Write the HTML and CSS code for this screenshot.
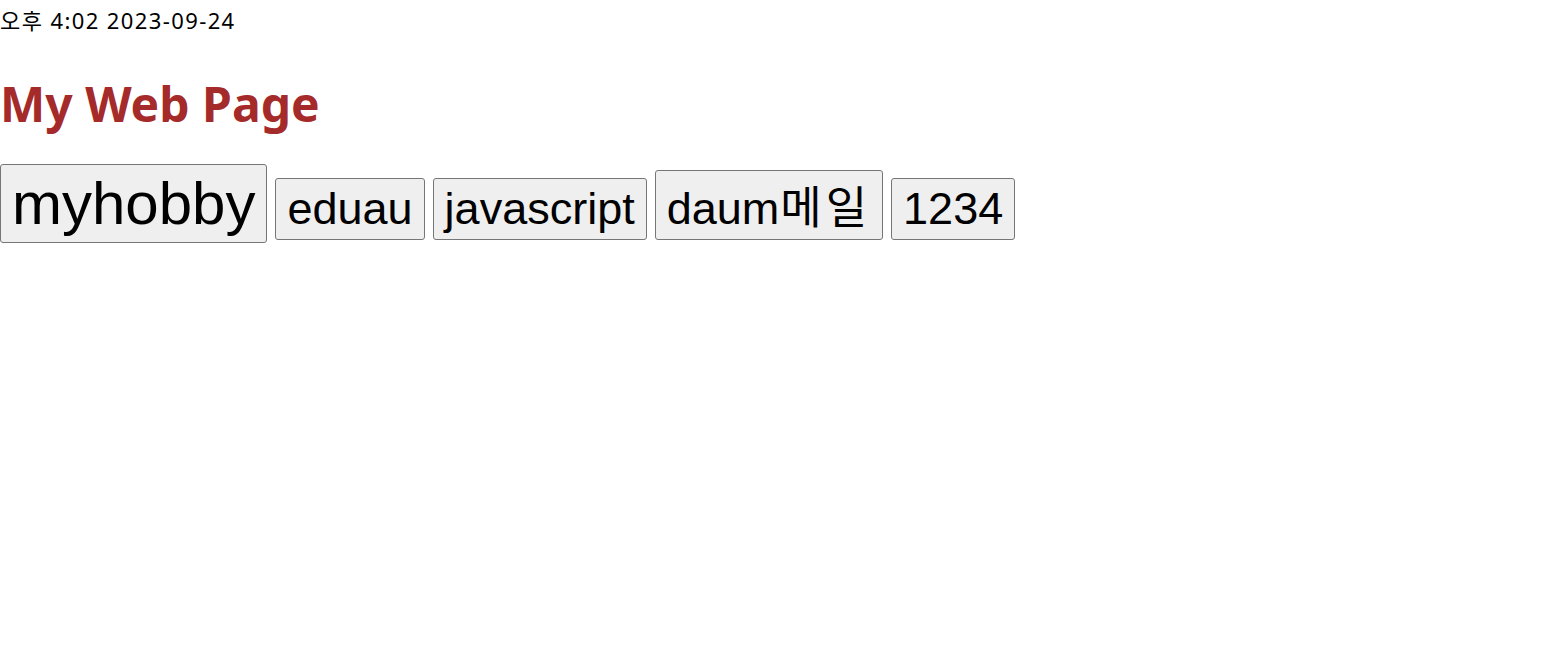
FILE: index.html
```html
<!DOCTYPE html>
<html lang="ko">
<head>
<meta charset="utf-8">
<title>My Web Page</title>
<link rel="stylesheet" href="styles.css">
</head>
<body>
<div class="date">오후 4:02 2023-09-24</div>
<h1 class="title">My Web Page</h1>
<div class="buttons">
  <button class="btn btn-big">myhobby</button>
  <button class="btn">eduau</button>
  <button class="btn">javascript</button>
  <button class="btn btn-kr">daum<span class="kr">메일</span></button>
  <button class="btn">1234</button>
</div>
</body>
</html>
```

FILE: styles.css
```css
html, body {
  margin: 0;
  padding: 0;
  background: #ffffff;
}

body {
  font-family: "Noto Sans", "Noto Sans CJK KR", sans-serif;
  color: #000000;
}

.date {
  font-size: 22px;
  letter-spacing: 1.4px;
  line-height: 28px;
  padding-top: 6px;
}

.title {
  margin: 40px 0 0 0;
  font-size: 48px;
  line-height: 60px;
  font-weight: 700;
  color: #a52a2a;
}

.buttons {
  display: flex;
  align-items: baseline;
  gap: 8px;
  margin-top: 30px;
}

.btn {
  font-family: "Liberation Sans", "Noto Sans CJK KR", sans-serif;
  font-size: 45px;
  line-height: 52px;
  padding: 4px 11px;
  margin: 0;
  border: 1px solid #767676;
  border-radius: 3px;
  background: #efefef;
  color: #000000;
}

.btn-big {
  font-size: 60px;
  line-height: 69px;
}

.btn-kr {
  padding-top: 12px;
}

.kr {
  letter-spacing: 4px;
  padding-left: 1px;
}
```
